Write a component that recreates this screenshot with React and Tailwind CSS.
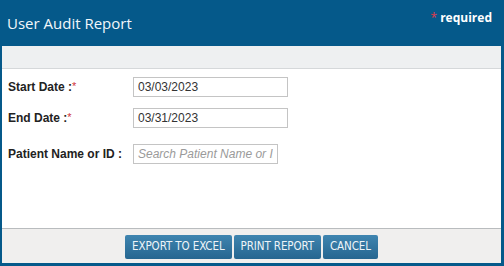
import React from 'react';

const Field = ({ label, required, value, placeholder, narrow, className }) => (
  <div className={`flex items-center ${className}`}>
    <label className="w-[125px] text-[12px] font-bold text-[#222]">
      {label} :{required && <span className="text-[#d0333a] font-normal align-top text-[11px]">*</span>}
    </label>
    <input
      type="text"
      defaultValue={value}
      placeholder={placeholder}
      className={`h-[20px] ${narrow ? 'w-[145px]' : 'w-[155px]'} border border-[#c4c4c4] px-[4px] text-[12px] text-[#333] placeholder:italic placeholder:text-[#9a9a9a] outline-none`}
    />
  </div>
);

const Button = ({ children }) => (
  <button className="h-[24px] px-[7px] rounded-[2px] bg-gradient-to-b from-[#3f85b0] to-[#266690] text-[11.5px] text-[#eef4f8] tracking-[-0.1px] font-['DejaVu_Sans_Condensed','DejaVu_Sans',sans-serif]">
    {children}
  </button>
);

export default function App() {
  return (
    <div className="w-[504px] h-[266px] bg-[#05598a] flex flex-col font-['Liberation_Sans',Arial,sans-serif]">
      <div className="h-[46px] flex justify-between pl-[7px] pr-[12px]">
        <h1 className="pt-[12px] text-[15px] text-[#f2f7fb] font-['Open_Sans',sans-serif]">User Audit Report</h1>
        <div className="pt-[9px] text-[12px] font-bold text-white font-['Open_Sans',sans-serif]">
          <span className="text-[#e23a4a] font-normal mr-[3px]">*</span>required
        </div>
      </div>
      <div className="flex-1 flex flex-col bg-white ml-[2px] mr-[3px] mb-[3px]">
        <div className="h-[23px] bg-[#eef0f1] border-b border-[#d5d8da]"></div>
        <div className="flex-1 pl-[6px] pt-[8px]">
          <Field label="Start Date" required value="03/03/2023" />
          <Field label="End Date" required value="03/31/2023" className="mt-[11px]" />
          <Field label="Patient Name or ID" placeholder="Search Patient Name or ID" narrow className="mt-[16px]" />
        </div>
        <div className="h-[35px] border-t border-[#b9bcbe] bg-[#f0efee] flex justify-center items-start pt-[6px] gap-[2px]">
          <Button>EXPORT TO EXCEL</Button>
          <Button>PRINT REPORT</Button>
          <Button>CANCEL</Button>
        </div>
      </div>
    </div>
  );
}
